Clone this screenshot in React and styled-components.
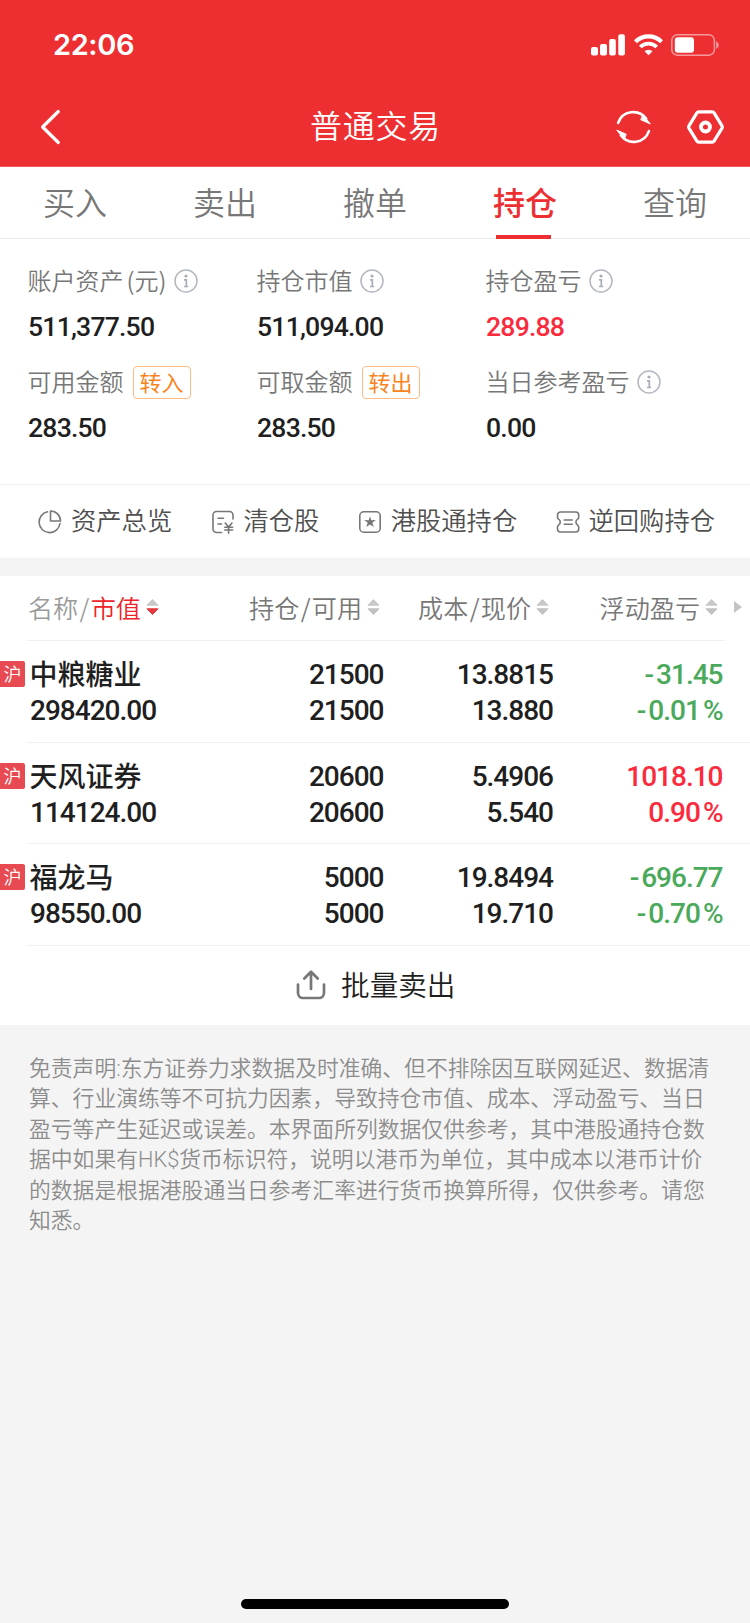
import React from "react";
import styled, { createGlobalStyle } from "styled-components";

const RED = "#ed2f32";
const UP = "#fb2a3c";
const DOWN = "#4aa95b";

const GlobalStyle = createGlobalStyle`
  *, *::before, *::after { box-sizing: border-box; }
  body {
    margin: 0;
    background: #f4f4f4;
    font-family: "Noto Sans CJK SC", sans-serif;
    color: #1f1f1f;
  }
`;

const Screen = styled.div`
  width: 750px;
  height: 1623px;
  display: flex;
  flex-direction: column;
  background: #f4f4f4;
  overflow: hidden;
  white-space: nowrap;
`;

const TopArea = styled.header`
  height: 167px;
  background: ${RED};
  color: #fff;
  border-bottom: 1px solid #ee5a5c;
`;

const StatusBar = styled.div`
  height: 88px;
  padding: 2px 30px 0 53px;
  display: flex;
  align-items: center;
  justify-content: space-between;
`;

const Clock = styled.span`
  font: 600 29px/32px Inter, sans-serif;
  letter-spacing: -0.4px;
`;

const StatusIcons = styled.div`
  display: flex;
  align-items: center;
  gap: 8.5px;
`;

const NavBar = styled.div`
  height: 77px;
  padding: 0 26px 0 40px;
  display: grid;
  grid-template-columns: 108px 1fr 108px;
  align-items: center;
`;

const Title = styled.h1`
  margin: 0;
  padding: 0 13px 6px 0;
  font-size: 32px;
  line-height: 40px;
  font-weight: 350;
  letter-spacing: 0.7px;
  text-align: center;
`;

const NavActions = styled.div`
  display: flex;
  align-items: center;
  justify-content: flex-end;
  gap: 36px;
`;

const Tabs = styled.nav`
  height: 72px;
  background: #fff;
  border-bottom: 1px solid #ececec;
  display: grid;
  grid-template-columns: repeat(5, 150px);
`;

const Tab = styled.div`
  height: 72px;
  display: flex;
  flex-direction: column;
  align-items: center;
  justify-content: space-between;
  padding-top: 14px;
  font-size: 32px;
  line-height: 40px;
  font-weight: ${(p) => (p.$active ? 500 : 350)};
  color: ${(p) => (p.$active ? RED : "#777")};
  &::after {
    content: "";
    width: 55px;
    height: 4px;
    margin-right: 3px;
    background: ${(p) => (p.$active ? RED : "transparent")};
  }
`;

const Summary = styled.section`
  height: 246px;
  padding: 22px 0 0 28px;
  background: #fff;
  border-bottom: 1px solid #efefef;
  display: grid;
  grid-template-columns: 229px 229px 1fr;
  grid-template-rows: 101px 101px;
`;

const Metric = styled.div`
  display: flex;
  flex-direction: column;
`;

const MetricLabel = styled.div`
  height: 40px;
  display: flex;
  align-items: center;
  font-size: 24px;
  color: #777;
  svg { margin-left: 7px; }
`;

const LabelText = styled.span`
  margin-left: -0.5px;
  padding-bottom: 4px;
  font-weight: 350;
`;

const Unit = styled.span`
  margin: 0 1px 0 3px;
`;

const Transfer = styled.span`
  width: 58px;
  height: 33px;
  margin-left: 9px;
  padding-bottom: 3px;
  border: 1px solid #fdbb86;
  border-radius: 4px;
  display: flex;
  align-items: center;
  justify-content: center;
  font-size: 22px;
  line-height: 30px;
  font-weight: 400;
  color: #fa8321;
`;

const MetricValue = styled.div`
  margin-top: 8px;
  font: 500 26.6px/36px Roboto, sans-serif;
  letter-spacing: -0.8px;
  color: ${(p) => (p.$up ? UP : "#1f1f1f")};
`;

const Links = styled.section`
  height: 73px;
  background: #fff;
  padding: 0 35px 0 37px;
  display: flex;
  align-items: center;
  justify-content: space-between;
`;

const LinkItem = styled.div`
  display: flex;
  align-items: center;
  gap: 8px;
`;

const LinkText = styled.span`
  padding-bottom: 5px;
  font-size: 25.3px;
  line-height: 36px;
  font-weight: 350;
  color: #4f4f4f;
`;

const Holdings = styled.section`
  margin-top: 18px;
  height: 449px;
  background: #fff;
`;

const COLUMNS = "30px 183.5px 170px 169.5px 169.5px";

const HeadRow = styled.div`
  height: 65px;
  margin: 0 25px 0 27px;
  padding-bottom: 2px;
  border-bottom: 1px solid #efefef;
  display: grid;
  grid-template-columns: 186px 167px 169px 169px 24px;
  align-items: center;
`;

const HeadCell = styled.div`
  display: flex;
  align-items: center;
  justify-content: ${(p) => (p.$left ? "flex-start" : "flex-end")};
  padding-left: ${(p) => (p.$left ? "1px" : "0")};
  font-size: 25.1px;
  line-height: 36px;
  font-weight: 350;
  color: ${(p) => (p.$left ? "#9b9b9b" : "#777")};
  svg { margin-left: 5px; flex: none; }
`;

const Slash = styled.span`
  width: 12.5px;
  text-align: center;
`;

const Sorted = styled.span`
  color: #ee2229;
`;

const MoreSlot = styled.div`
  display: flex;
  padding-left: 16px;
`;

const Row = styled.div`
  height: 101.5px;
  display: grid;
  grid-template-columns: ${COLUMNS};
  grid-template-rows: 36px 36px;
  padding-top: 16px;
  background: linear-gradient(#efefef, #efefef) 27px 100% / 723px 1px no-repeat;
`;

const Badge = styled.span`
  width: 25px;
  height: 26px;
  margin-top: 4px;
  border-radius: 0 2px 2px 0;
  background: #e74b51;
  color: #fff;
  font-size: 18px;
  line-height: 24px;
  font-weight: 350;
  text-align: center;
  grid-row: 1 / 3;
`;

const StockName = styled.span`
  margin: -2px 0 0 -0.5px;
  font-size: 28px;
  line-height: 36px;
  font-weight: 500;
`;

const Num = styled.span`
  font: 500 28px/36px Roboto, sans-serif;
  letter-spacing: -1px;
  text-align: ${(p) => (p.$left ? "left" : "right")};
  color: ${(p) => (p.$tone === "up" ? UP : p.$tone === "down" ? DOWN : "#1f1f1f")};
`;

const Minus = styled.span`
  margin-right: 3px;
`;

const Percent = styled.span`
  margin-left: 3px;
`;

const BatchSell = styled.div`
  height: 79.5px;
  padding-left: 1px;
  display: flex;
  align-items: center;
  justify-content: center;
  gap: 15.5px;
`;

const BatchText = styled.span`
  padding-bottom: 2px;
  font-size: 28.6px;
  line-height: 40px;
  font-weight: 350;
`;

const Disclaimer = styled.p`
  margin: 28.5px 0 0 29px;
  font-family: Roboto, "Noto Sans CJK SC", sans-serif;
  font-size: 21.8px;
  line-height: 30.5px;
  font-weight: 350;
  color: #8c8c8c;
  white-space: pre-line;
`;

const HomeBar = styled.div`
  width: 268px;
  height: 10px;
  border-radius: 5px;
  background: #000;
  margin: auto auto 14.5px;
`;

const Signal = () => (
  <svg width="34" height="22" viewBox="0 0 34 22" fill="#fff">
    <rect x="0" y="13" width="7" height="8.5" rx="2" />
    <rect x="9" y="10" width="7" height="11.5" rx="2" />
    <rect x="18.2" y="5" width="6.6" height="16.5" rx="2" />
    <rect x="27.3" y="0.3" width="6.6" height="21.2" rx="2" />
  </svg>
);

const Wifi = () => (
  <svg width="29" height="22" viewBox="0 0 29 22" fill="none" stroke="#fff">
    <path d="M1.5 7.8a18.4 18.4 0 0 1 26 0" strokeWidth="4.2" />
    <path d="M6.3 13a11.7 11.7 0 0 1 16.4 0" strokeWidth="3.8" />
    <path d="M14.5 21.3l-4-4a5.7 5.7 0 0 1 8 0z" fill="#fff" stroke="none" />
  </svg>
);

const Battery = () => (
  <svg width="49" height="22" viewBox="0 0 49 22">
    <rect x="0.8" y="0.8" width="42.6" height="20.4" rx="5.5" fill="none" stroke="#f59a9c" strokeWidth="1.5" />
    <rect x="3.8" y="3.2" width="19.2" height="15.6" rx="3" fill="#fff" />
    <path d="M45.2 7.5c3.4 1.2 3.4 6 0 7.2z" fill="#f59a9c" />
  </svg>
);

const Back = () => (
  <svg width="22" height="36" viewBox="0 0 22 36" fill="none" stroke="#fff" strokeWidth="3.2" strokeLinecap="round" strokeLinejoin="round">
    <path d="M18.3 2.5L2.6 18l15.7 15.5" />
  </svg>
);

const Refresh = () => (
  <svg width="36" height="36" viewBox="0 0 36 36" fill="none" stroke="#fff" strokeWidth="2.7" strokeLinecap="round">
    <path d="M2.2 13.8A16.4 16.4 0 0 1 31 9.5" />
    <path d="M33.8 22.2A16.4 16.4 0 0 1 5 26.5" />
    <path d="M27.8 5.5L35.2 14.8L25.8 10.7z" fill="#fff" stroke="#fff" strokeWidth="1" strokeLinejoin="round" />
    <path d="M8.2 30.5L.8 21.2L10.2 25.3z" fill="#fff" stroke="#fff" strokeWidth="1" strokeLinejoin="round" />
  </svg>
);

const Gear = () => (
  <svg width="38" height="36" viewBox="0 0 38 36" fill="none" stroke="#fff" strokeWidth="3.3" strokeLinejoin="round">
    <path d="M12 2.5h14q1.2 0 1.8 1l8.2 13.4q.6 1.1 0 2.2L27.8 32.5q-.6 1-1.8 1H12q-1.2 0-1.8-1L2 19.1q-.6-1.1 0-2.2L10.2 3.5q.6-1 1.8-1z" />
    <circle cx="19" cy="18" r="4.6" strokeWidth="4" />
  </svg>
);

const Info = () => (
  <svg width="24" height="24" viewBox="0 0 24 24" fill="none" stroke="#b3b8c0">
    <circle cx="12" cy="12" r="11" strokeWidth="1.5" />
    <circle cx="12" cy="7" r="1.6" fill="#a9aeb6" stroke="none" />
    <path d="M10 10.8h2.3v6.6M10 17.5h4.2" stroke="#a9aeb6" strokeWidth="1.7" />
  </svg>
);

const iconProps = {
  width: 26,
  height: 26,
  viewBox: "0 0 26 26",
  fill: "none",
  stroke: "#777",
  strokeWidth: 1.6,
  strokeLinecap: "round",
  strokeLinejoin: "round",
};

const Pie = () => (
  <svg {...iconProps}>
    <path d="M10.5 2.8A10.5 10.5 0 1 0 23 14.5" />
    <path d="M13.5 2v10h10a10 10 0 0 0-10-10z" />
  </svg>
);

const Cleared = () => (
  <svg {...iconProps}>
    <path d="M11.5 23.5H6.5a3.500 3.500 0 0 1-3.500-3.500V6a3.500 3.500 0 0 1 3.500-3.500h13A3.500 3.500 0 0 1 23 6v4" />
    <path d="M8 9.2h5.5M8 15h3.5M15.2 14l3.4 4 3.4-4M14.8 18.200h7.800M14.800 21h7.800M18.600 18.200v6" />
  </svg>
);

const StarBox = () => (
  <svg {...iconProps}>
    <rect x="2.8" y="2.8" width="20.4" height="20.4" rx="4" />
    <path d="M13 7.2l1.300 4 4.500-.2-3.500 2.700 1.500 4.300-3.800-2.400-3.800 2.400 1.500-4.300-3.500-2.700 4.500.2z" fill="#777" stroke="none" />
  </svg>
);

const Ticket = () => (
  <svg {...iconProps}>
    <path d="M5.5 3h15.2a3 3 0 0 1 3 3v2.200q0 1.300-1.300 2.200a3.200 3.200 0 0 0 0 5.400q1.300.9 1.300 2.200v2a3 3 0 0 1-3 3H5.500a3 3 0 0 1-3-3v-2q0-1.300 1.300-2.200a3.200 3.200 0 0 0 0-5.400Q2.500 9.500 2.500 8.200V6a3 3 0 0 1 3-3z" />
    <path d="M9.200 11h8M9.200 15.300h8" />
  </svg>
);

const Sort = ({ desc }) => (
  <svg width="13" height="18" viewBox="0 0 13 18">
    <path d="M6.500 1.500l5.500 5.700H1z" fill="#c9c9c9" stroke="#c9c9c9" strokeLinejoin="round" strokeWidth="1" />
    <path d="M6.500 16.500l5.500-5.700H1z" fill={desc ? "#e3393f" : "#c2c2c2"} stroke={desc ? "#e3393f" : "#c2c2c2"} strokeLinejoin="round" strokeWidth="1" />
  </svg>
);

const More = () => (
  <svg width="8" height="12" viewBox="0 0 8 12">
    <path d="M0 0l8 6-8 6z" fill="#c4c4c4" />
  </svg>
);

const Upload = () => (
  <svg width="30" height="30" viewBox="0 0 30 30" fill="none" stroke="#777" strokeWidth="2.7" strokeLinecap="round" strokeLinejoin="round">
    <path d="M2 14.5V23a5 5 0 0 0 5 5h16a5 5 0 0 0 5-5v-8.5" />
    <path d="M15 19V2M8.3 8.5L15 1.8l6.7 6.7" />
  </svg>
);

const tabs = ["买入", "卖出", "撤单", "持仓", "查询"];

const metrics = [
  { label: "账户资产", unit: "(元)", value: "511,377.50", info: true },
  { label: "持仓市值", value: "511,094.00", info: true },
  { label: "持仓盈亏", value: "289.88", info: true, up: true },
  { label: "可用金额", value: "283.50", action: "转入" },
  { label: "可取金额", value: "283.50", action: "转出" },
  { label: "当日参考盈亏", value: "0.00", info: true },
];

const links = [
  [Pie, "资产总览"],
  [Cleared, "清仓股"],
  [StarBox, "港股通持仓"],
  [Ticket, "逆回购持仓"],
];

const stocks = [
  { name: "中粮糖业", worth: "298420.00", qty: "21500", cost: "13.8815", price: "13.880", gain: "-31.45", pct: "-0.01%", tone: "down" },
  { name: "天风证券", worth: "114124.00", qty: "20600", cost: "5.4906", price: "5.540", gain: "1018.10", pct: "0.90%", tone: "up" },
  { name: "福龙马", worth: "98550.00", qty: "5000", cost: "19.8494", price: "19.710", gain: "-696.77", pct: "-0.70%", tone: "down" },
];

const disclaimer = `免责声明:东方证券力求数据及时准确、但不排除因互联网延迟、数据清
算、行业演练等不可抗力因素，导致持仓市值、成本、浮动盈亏、当日
盈亏等产生延迟或误差。本界面所列数据仅供参考，其中港股通持仓数
据中如果有HK$货币标识符，说明以港币为单位，其中成本以港币计价
的数据是根据港股通当日参考汇率进行货币换算所得，仅供参考。请您
知悉。`;

const Change = ({ value, tone }) => (
  <Num $tone={tone}>
    {value.startsWith("-") && <Minus>-</Minus>}
    {value.replace(/[-%]/g, "")}
    {value.endsWith("%") && <Percent>%</Percent>}
  </Num>
);

export default function App() {
  return (
    <Screen lang="zh-CN">
      <GlobalStyle />
      <TopArea>
        <StatusBar>
          <Clock>22:06</Clock>
          <StatusIcons>
            <Signal />
            <Wifi />
            <Battery />
          </StatusIcons>
        </StatusBar>
        <NavBar>
          <Back />
          <Title>普通交易</Title>
          <NavActions>
            <Refresh />
            <Gear />
          </NavActions>
        </NavBar>
      </TopArea>
      <Tabs>
        {tabs.map((t) => (
          <Tab key={t} $active={t === "持仓"}>{t}</Tab>
        ))}
      </Tabs>
      <Summary>
        {metrics.map((m) => (
          <Metric key={m.label}>
            <MetricLabel>
              <LabelText>
                {m.label}
                {m.unit && <Unit>{m.unit}</Unit>}
              </LabelText>
              {m.info && <Info />}
              {m.action && <Transfer>{m.action}</Transfer>}
            </MetricLabel>
            <MetricValue $up={m.up}>{m.value}</MetricValue>
          </Metric>
        ))}
      </Summary>
      <Links>
        {links.map(([Icon, text]) => (
          <LinkItem key={text}>
            <Icon />
            <LinkText>{text}</LinkText>
          </LinkItem>
        ))}
      </Links>
      <Holdings>
        <HeadRow>
          <HeadCell $left>名称<Slash>/</Slash><Sorted>市值</Sorted><Sort desc /></HeadCell>
          <HeadCell>持仓<Slash>/</Slash>可用<Sort /></HeadCell>
          <HeadCell>成本<Slash>/</Slash>现价<Sort /></HeadCell>
          <HeadCell>浮动盈亏<Sort /></HeadCell>
          <MoreSlot><More /></MoreSlot>
        </HeadRow>
        {stocks.map((s) => (
          <Row key={s.name}>
            <Badge>沪</Badge>
            <StockName>{s.name}</StockName>
            <Num>{s.qty}</Num>
            <Num>{s.cost}</Num>
            <Change value={s.gain} tone={s.tone} />
            <Num $left>{s.worth}</Num>
            <Num>{s.qty}</Num>
            <Num>{s.price}</Num>
            <Change value={s.pct} tone={s.tone} />
          </Row>
        ))}
        <BatchSell>
          <Upload />
          <BatchText>批量卖出</BatchText>
        </BatchSell>
      </Holdings>
      <Disclaimer>{disclaimer}</Disclaimer>
      <HomeBar />
    </Screen>
  );
}
